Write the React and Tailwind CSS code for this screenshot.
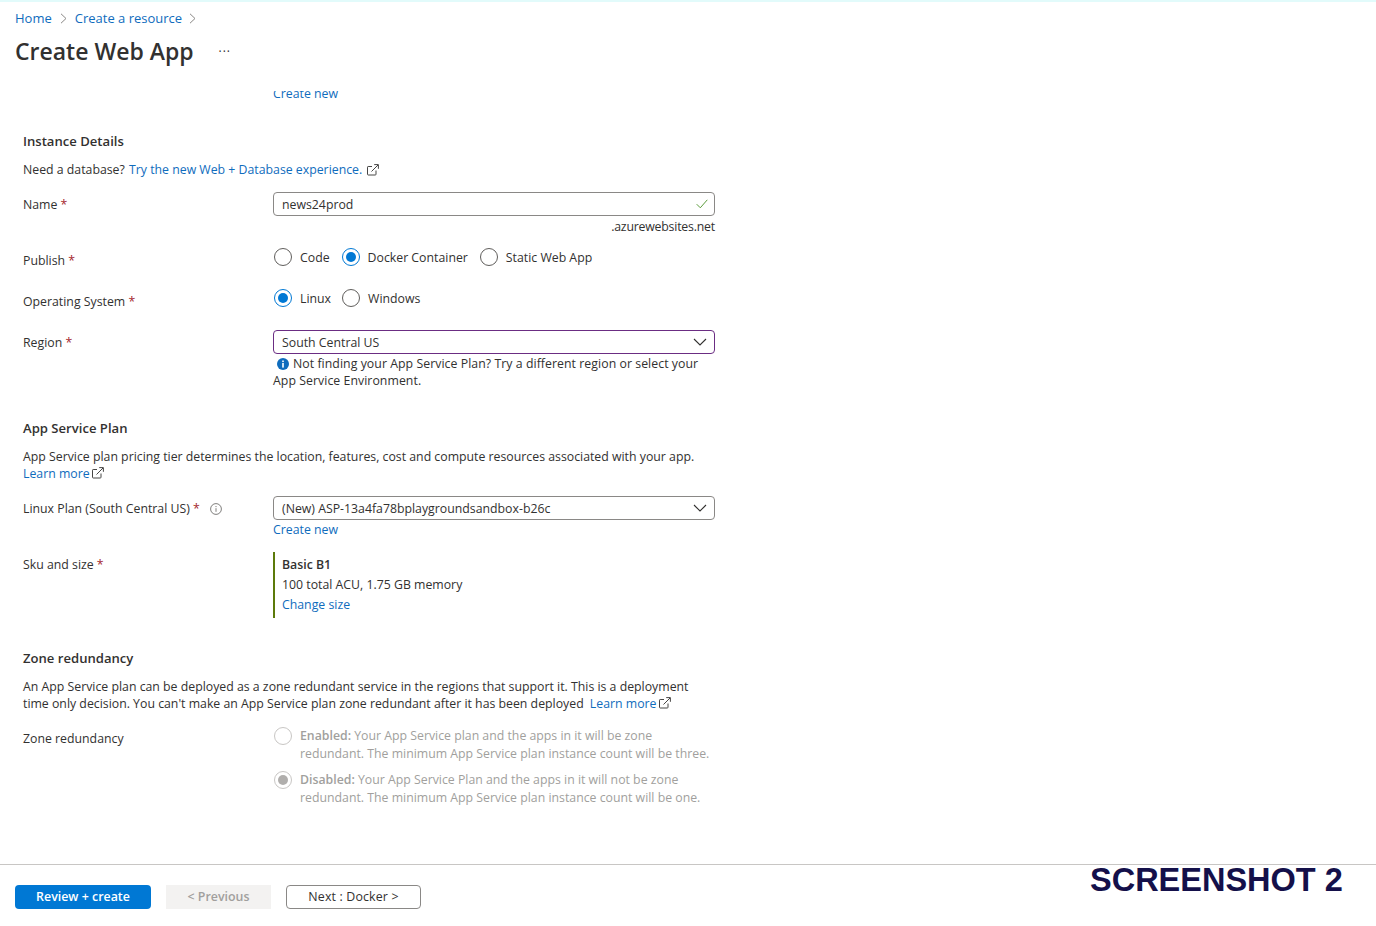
const Star = () => <span className="text-[#a4262c]"> *</span>;

const ExternalIcon = ({ className }) => (
  <svg className={className} width="12" height="12" viewBox="0 0 12 12" fill="none" stroke="#323130" strokeWidth="0.9">
    <path d="M5 2.5H1.2a.7.7 0 0 0-.7.7v7.1c0 .4.3.7.7.7h7.1c.4 0 .7-.3.7-.7V6.5" />
    <path d="M4.5 7.5L11 1M7.2.6h4.2v4.2" />
  </svg>
);

const Chevron = () => (
  <svg width="14" height="8" viewBox="0 0 14 8" fill="none" stroke="#323130" strokeWidth="1.1">
    <path d="M1 1l6 6 6-6" />
  </svg>
);

const Radio = ({ checked, disabled }) => (
  <span
    className={`flex h-[18px] w-[18px] shrink-0 items-center justify-center rounded-full border ${
      disabled ? "border-[#c8c6c4]" : checked ? "border-[#0078d4]" : "border-[#605e5c]"
    }`}
  >
    {checked && (
      <span className={`h-[10px] w-[10px] rounded-full ${disabled ? "bg-[#b0aeac]" : "bg-[#0078d4]"}`} />
    )}
  </span>
);

const RadioOption = ({ label, checked }) => (
  <div className="flex items-center gap-[8px]">
    <Radio checked={checked} />
    <span className="mr-[3px]">{label}</span>
  </div>
);

const Select = ({ value, purple }) => (
  <div
    className={`flex h-[24px] w-[442px] items-center justify-between rounded-sm border pl-[8px] pr-[7px] ${
      purple ? "border-[#6b2d83]" : "border-[#8a8886]"
    }`}
  >
    <span>{value}</span>
    <Chevron />
  </div>
);

const Row = ({ label, className = "", labelClass = "", children }) => (
  <div className={`flex ${className}`}>
    <div className={`flex w-[250px] shrink-0 ${labelClass}`}>{label}</div>
    <div className="w-[442px]">{children}</div>
  </div>
);

const Heading = ({ children, className = "" }) => (
  <h3 className={`h-[20px] text-[13.1px] font-semibold leading-[20px] ${className}`}>{children}</h3>
);

const A = ({ children, className = "" }) => <a className={`text-[#0f6cbd] ${className}`}>{children}</a>;

const App = () => {
  return (
    <div className="relative flex h-[926px] flex-col overflow-hidden bg-white font-['Open_Sans',sans-serif] text-[12.3px] leading-[17px] text-[#323130]">
      <div className="h-[2px] bg-[#e2fbfb]" />

      <nav className="mt-[8px] flex h-[17px] items-center pl-[15px] text-[13px]">
        <A>Home</A>
        <svg className="mx-[8px]" width="7" height="11" viewBox="0 0 7 11" fill="none" stroke="#8a8886">
          <path d="M1 .8L6 5.5 1 10.2" />
        </svg>
        <A>Create a resource</A>
        <svg className="mx-[7px]" width="7" height="11" viewBox="0 0 7 11" fill="none" stroke="#8a8886">
          <path d="M1 .8L6 5.5 1 10.2" />
        </svg>
      </nav>

      <header className="mt-[6px] flex h-[37px] items-center pl-[15px]">
        <h1 className="text-[23px] font-semibold leading-[37px]">Create Web App</h1>
        <span className="ml-[25px] text-[12px] tracking-[1px]">···</span>
      </header>

      {/* scrolled form: the first link is cut by the top edge */}
      <main className="mt-[21px] min-h-0 flex-1 overflow-hidden pl-[23px]">
        <div className="-mt-[6px] h-[17px] pl-[250px]">
          <A>Create new</A>
        </div>

        <Heading className="mt-[29px]">Instance Details</Heading>
        <p className="mt-[10px] flex items-center">
          Need a database?&nbsp;<A className="ml-[1px]">Try the new Web + Database experience.</A>
          <ExternalIcon className="ml-[5px]" />
        </p>

        <Row className="mt-[14px]" labelClass="items-start pt-[4px]" label={<span>Name<Star /></span>}>
          <div className="flex h-[24px] items-center justify-between rounded-sm border border-[#8a8886] pl-[8px] pr-[6px]">
            <span>news24prod</span>
            <svg width="12" height="10" viewBox="0 0 12 10" fill="none" stroke="#5c9c3c" strokeWidth="1">
              <path d="M.7 5.2l3.6 3.6L11.3.8" />
            </svg>
          </div>
          <div className="mt-[2px] text-right tracking-[-0.2px]">.azurewebsites.net</div>
        </Row>

        <Row className="mt-[12px]" labelClass="pt-[5px]" label={<span>Publish<Star /></span>}>
          <div className="flex h-[20px] items-center gap-[9px] pl-[1px]">
            <RadioOption label="Code" />
            <RadioOption label="Docker Container" checked />
            <RadioOption label="Static Web App" />
          </div>
        </Row>

        <Row className="mt-[19px]" labelClass="pt-[5px]" label={<span>Operating System<Star /></span>}>
          <div className="flex h-[20px] items-center gap-[8px] pl-[1px]">
            <RadioOption label="Linux" checked />
            <RadioOption label="Windows" />
          </div>
        </Row>

        <Row className="mt-[20px]" labelClass="items-start pt-[4px]" label={<span>Region<Star /></span>}>
          <Select value="South Central US" purple />
          <p className="mt-[1px]">
            <svg className="mb-[2px] ml-[4px] mr-[4px] inline-block" width="12" height="12" viewBox="0 0 12 12">
              <circle cx="6" cy="6" r="6" fill="#0f6cbd" />
              <rect x="5.2" y="5" width="1.6" height="4.6" fill="#fff" />
              <rect x="5.2" y="2.5" width="1.6" height="1.6" fill="#fff" />
            </svg>
            <span className="tracking-[0.05px]">Not finding your App Service Plan? Try a different region or select your App Service Environment.</span>
          </p>
        </Row>

        <Heading className="mt-[29px]">App Service Plan</Heading>
        <p className="mt-[10px] w-[680px]">
          App Service plan pricing tier determines the location, features, cost and compute resources associated with your app.
          <br />
          <A>Learn more</A>
          <ExternalIcon className="mb-[3px] ml-[2px] inline-block" />
        </p>

        <Row
          className="mt-[14px]"
          labelClass="items-start pt-[4px]"
          label={
            <span className="flex items-center">
              <span>Linux Plan (South Central US)<Star /></span>
              <svg className="ml-[10px] mt-[1px]" width="12" height="12" viewBox="0 0 12 12" fill="none" stroke="#605e5c" strokeWidth="0.8">
                <circle cx="6" cy="6" r="5.4" />
                <path d="M6 5.2v3.6M6 3v1.1" />
              </svg>
            </span>
          }
        >
          <Select value="(New) ASP-13a4fa78bplaygroundsandbox-b26c" />
          <div className="mt-[1px]">
            <A>Create new</A>
          </div>
        </Row>

        <Row className="mt-[14px]" labelClass="pt-[4px]" label={<span>Sku and size<Star /></span>}>
          <div className="flex h-[66px] flex-col justify-center gap-[3px] border-l-2 border-[#5c7a0a] pb-[2px] pl-[7px]">
            <b className="font-semibold">Basic B1</b>
            <span>100 total ACU, 1.75 GB memory</span>
            <A>Change size</A>
          </div>
        </Row>

        <Heading className="mt-[30px]">Zone redundancy</Heading>
        <p className="mt-[10px] w-[680px]">
          An App Service plan can be deployed as a zone redundant service in the regions that support it. This is a deployment time only decision. You can't make an App Service plan zone redundant after it has been deployed&nbsp;
          <A className="ml-[3px]">Learn more</A>
          <ExternalIcon className="mb-[3px] ml-[3px] inline-block" />
        </p>

        <Row className="mt-[15px]" labelClass="pt-[3px]" label="Zone redundancy">
          <div className="flex flex-col gap-[8px] text-[#a19f9d] leading-[18px]">
            <div className="flex gap-[8px] pl-[1px]">
              <Radio disabled />
              <span className="w-[418px]">
                <b className="font-semibold">Enabled:</b> Your App Service plan and the apps in it will be zone redundant. The minimum App Service plan instance count will be three.
              </span>
            </div>
            <div className="flex gap-[8px] pl-[1px]">
              <Radio checked disabled />
              <span className="w-[418px]">
                <b className="font-semibold">Disabled:</b> Your App Service Plan and the apps in it will not be zone redundant. The minimum App Service plan instance count will be one.
              </span>
            </div>
          </div>
        </Row>
      </main>

      <footer className="flex h-[62px] shrink-0 gap-[15px] border-t border-[#c8c6c4] pl-[15px] pt-[20px]">
        <button className="h-[24px] w-[136px] rounded-sm bg-[#0078d4] pb-[2px] text-[12.4px] font-semibold text-white">
          Review + create
        </button>
        <button className="h-[24px] w-[105px] bg-[#f3f2f1] pb-[2px] text-[12.4px] font-semibold text-[#a19f9d]">
          &lt; Previous
        </button>
        <button className="h-[24px] w-[135px] rounded-sm border border-[#8a8886] pb-[2px] text-[12.4px] font-medium tracking-[0.15px]">
          Next : Docker &gt;
        </button>
      </footer>

      <div className="absolute left-[1090px] top-[861px] font-['Liberation_Sans',sans-serif] text-[32.5px] font-bold leading-[38px] text-[#14104a]">
        SCREENSHOT 2
      </div>
    </div>
  );
};

export default App;
